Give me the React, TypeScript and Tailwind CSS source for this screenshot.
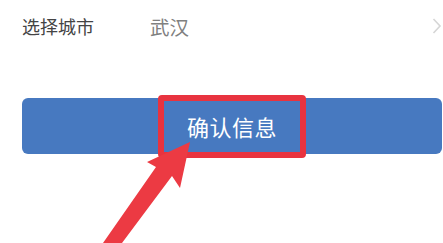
export default function App() {
  return (
    <div
      className="relative w-[443px] h-[243px] overflow-hidden bg-white"
      style={{ fontFamily: '"Noto Sans CJK SC", "Noto Sans", sans-serif' }}
    >
      {/* City row */}
      <div className="flex items-center h-[53px] pl-[22px]">
        <span className="w-[128px] text-[18px] text-[#444444]">选择城市</span>
        <span className="flex-1 text-[19.5px] text-[#808080]">武汉</span>
        <svg width="10" height="16" viewBox="0 0 10 16" className="mr-[1px] mb-[1px]">
          <polyline points="1.5,1 8,8 1.5,15" fill="none" stroke="#d6d6d6" strokeWidth="1.6" />
        </svg>
      </div>

      {/* Confirm button */}
      <div className="mt-[45px] ml-[22px] w-[420px] h-[56px] rounded-[6px] bg-[#4779c0] flex items-center justify-center">
        <span className="text-[22px] text-white tracking-[0.5px]">确认信息</span>
      </div>

      {/* Annotation box */}
      <div className="absolute left-[158px] top-[95px] w-[148px] h-[63px] border-[6px] border-[#e8333f] rounded-[4px]" />

      {/* Annotation arrow */}
      <svg className="absolute left-0 top-0" width="443" height="243" viewBox="0 0 443 243">
        <polygon
          points="190,142 180,188 172,176 122,243 103,243 156,167 147,162"
          fill="#ec3a43"
        />
      </svg>
    </div>
  );
}
